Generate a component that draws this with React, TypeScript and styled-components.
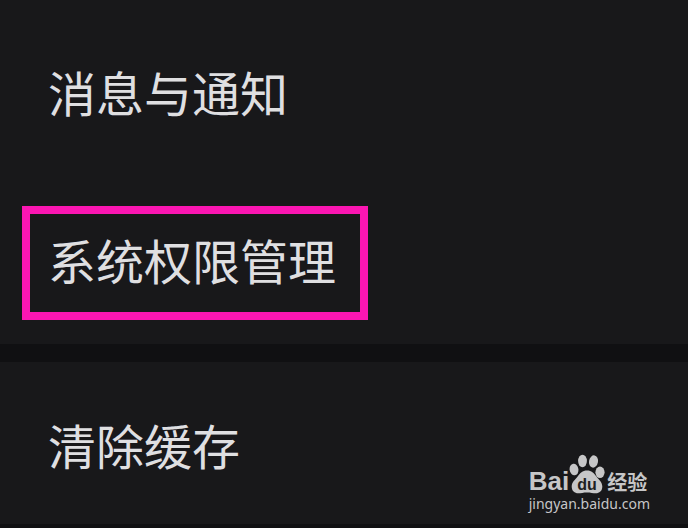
import React from "react";
import styled, { createGlobalStyle } from "styled-components";

const Global = createGlobalStyle`
  * { box-sizing: border-box; }
  html { background: #101012; }
  body {
    margin: 0;
    background: #101012;
    font-family: "Noto Sans CJK SC", "Noto Sans", sans-serif;
  }
`;

const Page = styled.main`
  position: relative;
  display: flex;
  flex-direction: column;
  gap: 18px;
  padding-bottom: 4px;
`;

const Section = styled.section<{ $top: number; $bottom: number }>`
  display: flex;
  flex-direction: column;
  align-items: flex-start;
  gap: 54px;
  padding: ${(p) => p.$top}px 22px ${(p) => p.$bottom}px;
  background: #18181a;
`;

const Item = styled.button<{ $marked?: boolean }>`
  height: 114px;
  padding: 0 24px 8px 18px;
  border: 8px solid ${(p) => (p.$marked ? "#fb16b2" : "transparent")};
  background: none;
  color: #dfdfe1;
  font-family: inherit;
  font-size: 48px;
  font-weight: 400;
  line-height: 72px;
  white-space: nowrap;
  cursor: pointer;
`;

const Watermark = styled.a`
  position: absolute;
  right: 38px;
  bottom: 14px;
  display: flex;
  flex-direction: column;
  color: #c6c6c7;
  text-decoration: none;
`;

const Brand = styled.span`
  display: flex;
  align-items: flex-end;
  height: 40px;
`;

const Latin = styled.span`
  font: bold 26px/26px "Liberation Sans", sans-serif;
`;

const Chinese = styled.span`
  font-size: 20px;
  font-weight: 700;
  line-height: 24px;
`;

const Paw = styled.svg`
  display: block;
  width: 38px;
  height: 40px;
`;

const Address = styled.span`
  font: 14px/20px "Noto Sans", sans-serif;
`;

export default function App() {
  return (
    <>
      <Global />
      <Page>
        <Section $top={38} $bottom={24}>
          <Item>消息与通知</Item>
          <Item $marked>系统权限管理</Item>
        </Section>
        <Section $top={29} $bottom={19}>
          <Item>清除缓存</Item>
        </Section>
        <Watermark href="#jingyan">
          <Brand>
            <Latin>Bai</Latin>
            <Paw viewBox="0 0 38 40" aria-label="du">
              <g fill="#c6c6c7">
                <ellipse cx="5" cy="15.5" rx="4.4" ry="5.8" transform="rotate(-8 5 15.5)" />
                <ellipse cx="13.500" cy="7" rx="4.4" ry="6.2" />
                <ellipse cx="24.500" cy="7.5" rx="4.5" ry="6.2" transform="rotate(10 24.5 7.5)" />
                <ellipse cx="31" cy="18.3" rx="4.6" ry="5.8" />
                <path d="M18 16.5c4.500 0 7 2.500 9 5.500 3 4 6.300 6 6.300 10.500 0 4.500-3 6.800-6.500 6.800-3 0-5-.8-8.800-.8s-5.800.8-8.800.8c-3.500 0-6.500-2.300-6.500-6.800 0-4.500 3.300-6.500 6.300-10.500 2-3 4.500-5.500 9-5.500z" />
              </g>
              <text x="18" y="36" fill="#202022" textAnchor="middle" fontFamily="Liberation Sans, sans-serif" fontSize="16" fontWeight="bold">du</text>
            </Paw>
            <Chinese>经验</Chinese>
          </Brand>
          <Address>jingyan.baidu.com</Address>
        </Watermark>
      </Page>
    </>
  );
}
